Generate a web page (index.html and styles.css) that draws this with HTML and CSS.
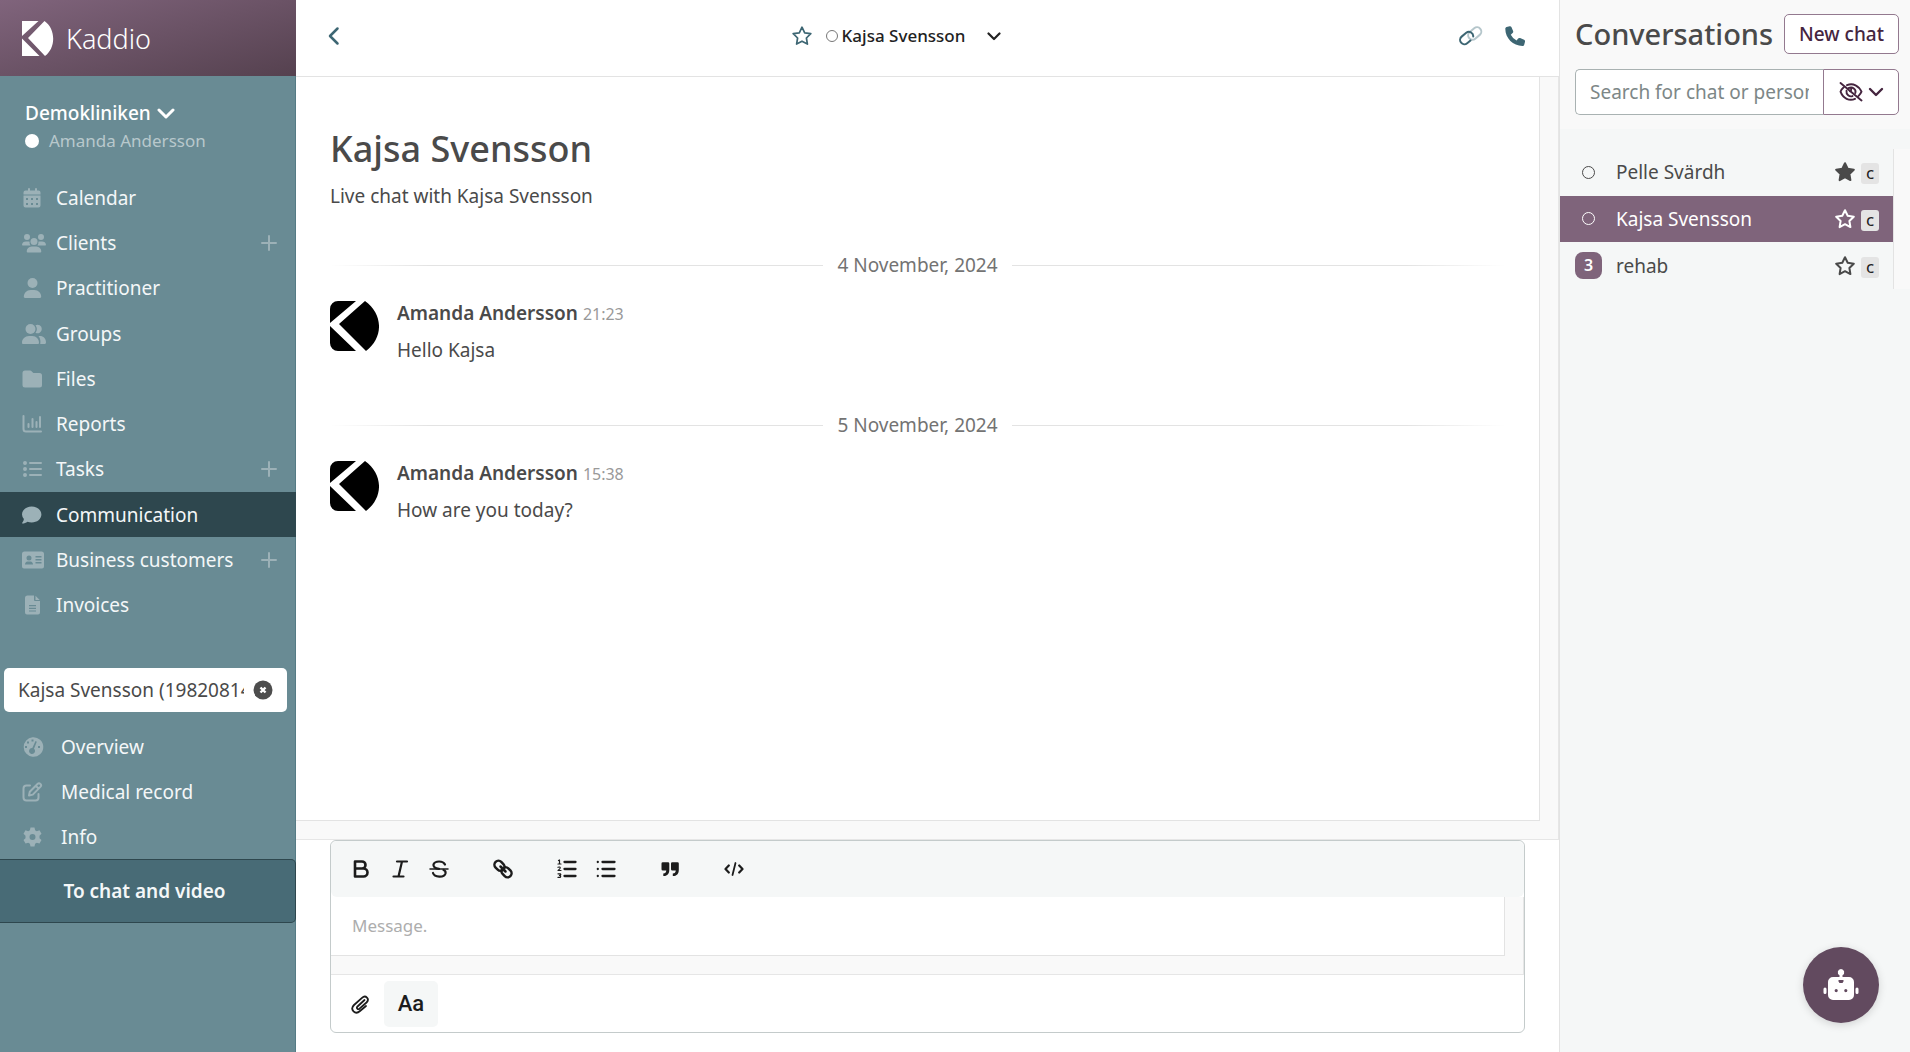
FILE: index.html
```html
<!DOCTYPE html>
<html lang="en">
<head>
<meta charset="utf-8">
<title>Kaddio – Kajsa Svensson</title>
<meta name="viewport" content="width=device-width, initial-scale=1">
<link rel="stylesheet" href="styles.css">
</head>
<body>
<div class="app">
  <aside class="sidebar">
    <a class="brand" href="#">
      <svg class="brand-logo" viewBox="0 0 32 36" aria-hidden="true"><path d="M0 0h16.500L0 15zM22.500 0C34 8 34 27 23 35L6 17zM0 17.500L17.500 35H0z"/></svg>
      <span>Kaddio</span>
    </a>
    <div class="account">
      <button class="clinic" type="button">Demokliniken
        <svg width="18" height="18" viewBox="0 0 18 18" fill="none" stroke="currentColor" stroke-width="3" stroke-linecap="round" stroke-linejoin="round" aria-hidden="true"><path d="M2 6l7 7 7-7"/></svg>
      </button>
      <div class="user"><span class="dot"></span>Amanda Andersson</div>
    </div>
    <nav class="nav" aria-label="Main">
      <div class="item"><a href="#"><svg class="icon" viewBox="0 0 24 20"><path fill-rule="evenodd" d="M6 1a1 1 0 0 1 2 0v1.500h5V1a1 1 0 0 1 2 0v1.500h1.500A2 2 0 0 1 18.500 4.500v2h-17v-2a2 2 0 0 1 2-2H6zM1.500 7.500h17v10a2 2 0 0 1-2 2h-13a2 2 0 0 1-2-2zM4 10v2h2v-2zm5 0v2h2v-2zm5 0v2h2v-2zM4 15v2h2v-2zm5 0v2h2v-2zm5 0v2h2v-2z"/></svg>Calendar</a></div>
      <div class="item"><a href="#"><svg class="icon" viewBox="0 0 24 20"><circle cx="5" cy="4" r="3"/><circle cx="19" cy="4" r="3"/><circle cx="12" cy="8.500" r="3.500"/><path d="M4 8.500h2.500c.4 0 .8.100 1.100.2A5 5 0 0 0 8.500 12.500H.7A.7.700 0 0 1 0 11.800 4 4 0 0 1 4 8.500zM20 8.500h-2.500c-.4 0-.8.100-1.100.2a5 5 0 0 1-.9 3.800h7.800a.7.700 0 0 0 .7-.7A4 4 0 0 0 20 8.500zM9.500 13.500h5A5 5 0 0 1 19.300 18.500a1 1 0 0 1-1 1H5.700a1 1 0 0 1-1-1A5 5 0 0 1 9.500 13.500z"/></svg>Clients</a><button class="add" type="button" aria-label="Add client"><svg viewBox="0 0 16 16"><path d="M8 1v14M1 8h14"/></svg></button></div>
      <div class="item"><a href="#"><svg class="icon" viewBox="0 0 24 20"><circle cx="10.500" cy="5" r="5"/><path d="M8.700 12h3.600c4 0 6.900 3 6.900 6.800 0 .7-.5 1.200-1.200 1.200H3c-.7 0-1.200-.5-1.200-1.200C1.800 15 4.700 12 8.700 12z"/></svg>Practitioner</a></div>
      <div class="item"><a href="#"><svg class="icon" viewBox="0 0 24 20"><circle cx="8.500" cy="5" r="5"/><path d="M7 12h3.500c3.600 0 6.500 3 6.500 6.700 0 .7-.5 1.300-1.200 1.300H1.200C.5 20 0 19.400 0 18.700 0 15 3 12 7 12zM13.500 1.200a4.300 4.300 0 1 1 0 7.600A6.500 6.500 0 0 0 13.500 1.200zM16.500 12H18c3.400 0 6 2.700 6 6.200 0 1.200-.6 1.800-1.300 1.800h-4.500c.6-3.400-.2-6-1.700-8z"/></svg>Groups</a></div>
      <div class="item"><a href="#"><svg class="icon" viewBox="0 0 24 20"><path d="M3 1.500h5c.8 0 1.300.3 1.800.9l1 1c.4.500.8.600 1.400.600H17.500a2.500 2.500 0 0 1 2.500 2.500V16a2.500 2.500 0 0 1-2.500 2.500H3A2.500 2.500 0 0 1 .5 16V4A2.500 2.500 0 0 1 3 1.500z"/></svg>Files</a></div>
      <div class="item"><a href="#"><svg class="icon line" viewBox="0 0 24 20"><path d="M1.500 2v13a2.500 2.500 0 0 0 2.500 2.500h15M6.500 10v3M10.500 5v8M14.500 8v5M18 3v10"/></svg>Reports</a></div>
      <div class="item"><a href="#"><svg class="icon line" viewBox="0 0 24 20"><path d="M8 4h11M8 10h11M8 16h11"/><path stroke-width="4" d="M3 4h0M3 10h0M3 16h0"/></svg>Tasks</a><button class="add" type="button" aria-label="Add task"><svg viewBox="0 0 16 16"><path d="M8 1v14M1 8h14"/></svg></button></div>
      <div class="item active"><a href="#" aria-current="page"><svg class="icon" viewBox="0 0 24 20"><path d="M9.700 1.500c5.400 0 9.700 3.600 9.700 8s-4.300 8-9.700 8c-1.500 0-3-.3-4.200-.8-1.500 1.100-3.300 1.800-5.200 1.800-.4-.3-.2-.7.100-1 .9-1 1.400-2.200 1.500-3.400A7.300 7.300 0 0 1 0 9.500c0-4.400 4.300-8 9.700-8z"/></svg>Communication</a></div>
      <div class="item"><a href="#"><svg class="icon" viewBox="0 0 24 20"><path fill-rule="evenodd" d="M2.500 1.500h17A2.500 2.500 0 0 1 22 4v12.500a2 2 0 0 1-2 2H2a2 2 0 0 1-2-2V4a2.500 2.500 0 0 1 2.500-2.500zM7 5.500a2.500 2.500 0 1 0 0 5 2.500 2.500 0 0 0 0-5zM5.500 11.500C4 11.500 3 13 3 14.500h8c0-1.500-1-3-2.500-3zM13.500 6v1.500h6V6zm0 3v1.500h6V9zm0 3v1.500h6V12z"/></svg>Business customers</a><button class="add" type="button" aria-label="Add business customer"><svg viewBox="0 0 16 16"><path d="M8 1v14M1 8h14"/></svg></button></div>
      <div class="item"><a href="#"><svg class="icon" viewBox="0 0 24 20"><path fill-rule="evenodd" d="M5.500.5H12V5a1 1 0 0 0 1 1h5v11.500a2 2 0 0 1-2 2H5a2 2 0 0 1-2-2V3A2.500 2.500 0 0 1 5.500.5zM13.500.8L17.700 5h-4.200zM7 10v1.200h7V10zm0 2.700v1.200h7v-1.200zm0 2.700v1.200h7v-1.200z"/></svg>Invoices</a></div>
    </nav>
    <div class="client-picker">
      <input type="text" aria-label="Selected client" value="Kajsa Svensson (19820814-1234)">
      <button type="button" aria-label="Clear client"><svg viewBox="0 0 20 20"><circle cx="10" cy="10" r="9.500" fill="#4d4d4d"/><path d="M7.500 7.500l5 5M12.500 7.500l-5 5" stroke="#fff" stroke-width="2.400"/></svg></button>
    </div>
    <nav class="nav client-nav" aria-label="Client">
      <div class="item"><a href="#"><svg class="icon" viewBox="0 0 24 20"><path fill-rule="evenodd" d="M10.500.3a9.800 9.800 0 1 1 0 19.500 9.800 9.800 0 0 1 0-19.500zm3 3.700L10.300 11A3 3 0 1 0 12 11.700L14.800 4.700zM9.500 2.500v2h2v-2zM5 4.500v2h2v-2zM3 9v2h2V9zm13 0v2h2V9z"/></svg>Overview</a></div>
      <div class="item"><a href="#"><svg class="icon line" viewBox="0 0 24 20"><path d="M8 3.500H4.500A3 3 0 0 0 1.500 6.500v9a3 3 0 0 0 3 3h9a3 3 0 0 0 3-3V12M7 13.500l.8-3.800 7.700-7.700a1.900 1.900 0 0 1 2.900 2.900l-7.600 7.700zM14 4l2.500 2.500"/></svg>Medical record</a></div>
      <div class="item"><a href="#"><svg class="icon" viewBox="0 0 24 20"><path fill-rule="evenodd" d="M8.500.5h4l.6 2.700 1.700 1 2.700-.9 2 3.500-2 1.900v2.500l2 1.900-2 3.500-2.700-.8-1.700 1-.6 2.700h-4l-.6-2.700-1.700-1-2.700.8-2-3.500 2-1.900V8.700l-2-1.900 2-3.500 2.700.9 1.700-1zM10.500 7a3 3 0 1 0 0 6 3 3 0 0 0 0-6z"/></svg>Info</a></div>
    </nav>
    <a class="to-chat" href="#">To chat and video</a>
  </aside>

  <main class="main">
    <header class="topbar">
      <button type="button" aria-label="Back"><svg width="22" height="22" viewBox="0 0 22 22" class="stroke" stroke-width="2.500"><path d="M13.500 3.500L6 11l7.500 7.500"/></svg></button>
      <div class="topbar-title">
        <button type="button" aria-label="Favourite"><svg width="20" height="20" viewBox="0 0 20 20" class="stroke" stroke-width="1.700"><path d="M10 1.200l2.700 5.600 6.100.9-4.400 4.300 1 6.100L10 15.200l-5.400 2.900 1-6.100L1.200 7.700l6.100-.9z"/></svg></button>
        <button class="person" type="button"><span class="ring"></span>Kajsa Svensson<svg width="14" height="14" viewBox="0 0 14 14" class="stroke" stroke-width="2.200"><path d="M1.500 4.500L7 10l5.500-5.500"/></svg></button>
      </div>
      <div class="topbar-actions">
        <button type="button" aria-label="Copy link"><svg width="24" height="20" viewBox="0 0 24 20" class="stroke" stroke-width="2"><rect x="8.500" y="3.200" width="14.500" height="8.600" rx="4.300" transform="rotate(-40 15.700 7.500)" stroke="#b5c6cb"/><path transform="rotate(-40 7.700 12)" d="M9 16.300H4.700a4.300 4.300 0 0 1 0-8.600h6a4.300 4.300 0 0 1 3 7.300"/></svg></button>
        <button type="button" aria-label="Call"><svg width="20" height="20" viewBox="0 0 20 20"><path fill="currentColor" d="M6.400 1.100l1.700 4c.3.700.1 1.500-.5 2L5.800 8.700a13 13 0 0 0 5.800 5.800l1.500-1.900c.5-.6 1.300-.8 2-.5l4 1.700c.7.300 1.100 1.100.9 1.900l-.8 3c-.2.800-.9 1.300-1.700 1.300C8.100 20 .3 12.200.3 2.800c0-.8.500-1.500 1.300-1.700l3-.9c.8-.2 1.500.2 1.800.9z"/></svg></button>
      </div>
    </header>

    <section class="scrollframe thread" aria-label="Messages">
      <div class="scrollbody messages">
        <h1>Kajsa Svensson</h1>
        <p class="intro">Live chat with Kajsa Svensson</p>
        <div class="day"><span>4 November, 2024</span></div>
        <article class="message">
          <svg class="avatar" viewBox="0 0 49 50" aria-hidden="true"><path d="M8 0h18L0 22V8a8 8 0 0 1 8-8zM35 0c18 13 19 36 1 50L9 23zM0 25l26 25H8a8 8 0 0 1-8-8z"/></svg>
          <div><div class="meta"><strong>Amanda Andersson</strong> <time>21:23</time></div><p>Hello Kajsa</p></div>
        </article>
        <div class="day"><span>5 November, 2024</span></div>
        <article class="message">
          <svg class="avatar" viewBox="0 0 49 50" aria-hidden="true"><path d="M8 0h18L0 22V8a8 8 0 0 1 8-8zM35 0c18 13 19 36 1 50L9 23zM0 25l26 25H8a8 8 0 0 1-8-8z"/></svg>
          <div><div class="meta"><strong>Amanda Andersson</strong> <time>15:38</time></div><p>How are you today?</p></div>
        </article>
      </div>
    </section>

    <form class="editor">
      <div class="toolbar">
        <div class="tools">
          <button type="button" aria-label="Bold"><svg viewBox="0 0 20 20" class="stroke" stroke-width="2.600"><path d="M4 2.500h7a3.500 3.500 0 0 1 0 7H4zM4 9.500h8.500a4 4 0 0 1 0 8H4z"/></svg></button>
          <button type="button" aria-label="Italic"><svg viewBox="0 0 20 20" class="stroke" stroke-width="2.200"><path d="M7 2.500h10M3.500 17.500h10M12 2.500L8.500 17.500"/></svg></button>
          <button type="button" aria-label="Strikethrough"><svg viewBox="0 0 20 20" class="stroke" stroke-width="2.200"><path d="M16 5.500C14 1.500 6 1.500 4.500 5.500 4 7.500 6 9.500 10 9.800M4 14c1.500 4.500 11 5 12.500.5.300-1.500-.5-3-2-3.500"/><path stroke-width="1.500" d="M1 10h18"/></svg></button>
        </div>
        <div class="tools">
          <button type="button" aria-label="Link"><svg viewBox="0 0 20 20" class="stroke" stroke-width="2.500"><rect x="1" y="2.800" width="11" height="8" rx="4" transform="rotate(45 6.500 6.800)"/><rect x="8" y="9.200" width="11" height="8" rx="4" transform="rotate(45 13.500 13.200)"/><path d="M7.500 7.500l5 5"/></svg></button>
        </div>
        <div class="tools">
          <button type="button" aria-label="Numbered list"><svg viewBox="0 0 20 20" class="stroke" stroke-width="2.300"><path d="M7.500 3h11M7.500 10h11M7.500 17h11"/><path stroke-width="1.200" d="M1.500 1.500l1-.5v4M1 5h3M1 8.300c2.500-1 3.500.5 0 3.200h3M1 14.800h2.500c.8 1-.2 1.600-1 1.600 1.500 0 1.500 2 .2 2H1"/></svg></button>
          <button type="button" aria-label="Bulleted list"><svg viewBox="0 0 20 20" class="stroke" stroke-width="2.300"><path d="M6.500 3h12M6.500 10h12M6.500 17h12M1.800 3h0M1.800 10h0M1.800 17h0"/></svg></button>
        </div>
        <div class="tools">
          <button type="button" aria-label="Quote"><svg viewBox="0 0 20 20"><path fill="currentColor" d="M1.500 4.500a1.300 1.300 0 0 1 1.300-1.300h5.200a1.300 1.300 0 0 1 1.300 1.300v6.200c0 4-2 6.300-6 6.300v-2.500c2 0 2.800-1 3-3H2.800a1.300 1.300 0 0 1-1.300-1.300zm9.500 0a1.300 1.300 0 0 1 1.300-1.300h5.200a1.300 1.300 0 0 1 1.300 1.300v6.200c0 4-2 6.300-6 6.300v-2.500c2 0 2.800-1 3-3h-3.500a1.300 1.300 0 0 1-1.300-1.300z"/></svg></button>
        </div>
        <div class="tools">
          <button type="button" aria-label="Code"><svg viewBox="0 0 20 20" class="stroke" stroke-width="2.200"><path d="M4.800 6.500L1.500 10l3.300 3.500M15.200 6.500l3.300 3.500-3.300 3.500"/><path stroke-width="1.800" d="M11.500 4l-3 12"/></svg></button>
        </div>
      </div>
      <div class="scrollframe">
        <textarea class="scrollbody" rows="1" placeholder="Message." aria-label="Message"></textarea>
      </div>
      <div class="editor-footer">
        <button class="attach" type="button" aria-label="Attach file"><svg width="20" height="20" viewBox="0 0 20 20" class="stroke" stroke-width="1.800"><path d="M14.500 6l-7 6.500c-1.500 1.500.3 3.500 2 2.200l7-6.200c3.500-3.500-.8-8-4.500-4.700L4 11c-4.500 4.500 1.200 10.300 6 6l6-5"/></svg></button>
        <button class="format" type="button" aria-pressed="true">Aa</button>
      </div>
    </form>
  </main>

  <aside class="conversations">
    <div class="conv-head">
      <div class="conv-title"><h2>Conversations</h2><button class="outline" type="button">New chat</button></div>
      <div class="conv-search">
        <input type="text" placeholder="Search for chat or person" aria-label="Search for chat or person">
        <button type="button" aria-label="Visibility">
          <svg width="24" height="20" viewBox="0 0 24 20" class="stroke" stroke-width="1.900"><path d="M1.500 1l21 17.500M8 3.200C14 .5 20 4 22.500 9.700c-.7 1.700-1.600 3-2.900 4.200M4.500 5.500C3 6.700 2 8.300 1.500 9.700 4 16.500 10.500 19.500 16 16.800"/><path d="M9.500 6.200c4-2.200 8 1.300 6.800 4.800M7.500 8.800c-.6 3.500 3 6.500 6 5.300M12 6c.5 1.500 0 3-1 3.200"/></svg>
          <svg width="16" height="16" viewBox="0 0 16 16" class="stroke" stroke-width="2.400"><path d="M2 5l6 6 6-6"/></svg>
        </button>
      </div>
    </div>
    <div class="conv-list">
      <ul>
        <li><span class="status"><span class="ring"></span></span><a href="#">Pelle Svärdh</a><svg class="star filled" viewBox="0 0 20 20"><path d="M10 1.200l2.700 5.600 6.100.9-4.400 4.300 1 6.100L10 15.200l-5.400 2.900 1-6.100L1.200 7.700l6.100-.9z"/></svg><kbd>c</kbd></li>
        <li class="selected"><span class="status"><span class="ring"></span></span><a href="#">Kajsa Svensson</a><svg class="star" viewBox="0 0 20 20"><path d="M10 1.200l2.700 5.600 6.100.9-4.400 4.300 1 6.100L10 15.200l-5.400 2.900 1-6.100L1.200 7.700l6.100-.9z"/></svg><kbd>c</kbd></li>
        <li><span class="status"><span class="count">3</span></span><a href="#">rehab</a><svg class="star" viewBox="0 0 20 20"><path d="M10 1.200l2.700 5.600 6.100.9-4.400 4.300 1 6.100L10 15.200l-5.400 2.900 1-6.100L1.200 7.700l6.100-.9z"/></svg><kbd>c</kbd></li>
      </ul>
    </div>
  </aside>
</div>
<button class="bot" type="button" aria-label="Assistant"><svg width="36" height="32" viewBox="0 0 36 32"><path fill="#fff" fill-rule="evenodd" d="M18 0a3.300 3.300 0 0 1 1.500 6.200V8H26a5 5 0 0 1 5 5v13a5 5 0 0 1-5 5H10a5 5 0 0 1-5-5V13a5 5 0 0 1 5-5h6.500V6.200A3.300 3.300 0 0 1 18 0zM15.500 11v1.500l1 1.500h3l1-1.500V11zM13.200 20a1.600 1.600 0 1 0 0 3.200 1.600 1.600 0 0 0 0-3.200zm9.600 0a1.600 1.600 0 1 0 0 3.200 1.600 1.600 0 0 0 0-3.200zM2 18.500a1.500 1.500 0 0 1 1.500 1.500v3.500a1.500 1.500 0 0 1-3 0V20A1.500 1.500 0 0 1 2 18.500zm32 0a1.500 1.500 0 0 1 1.500 1.500v3.500a1.500 1.500 0 0 1-3 0V20a1.500 1.500 0 0 1 1.500-1.500z"/></svg></button>
</body>
</html>
```
FILE: styles.css
```css
* { box-sizing: border-box; }

body {
  margin: 0;
  font-family: "Noto Sans", sans-serif;
  font-size: 19px;
  line-height: 28px;
  color: #4a4a4a;
  background: #fff;
}

h1, h2, p, ul { margin: 0; padding: 0; }
ul { list-style: none; }
a { color: inherit; text-decoration: none; }
button, input, textarea { font: inherit; color: inherit; }
button { display: inline-flex; align-items: center; justify-content: center; padding: 0; border: 0; background: none; cursor: pointer; }
svg { flex: none; }
.stroke { fill: none; stroke: currentColor; stroke-linecap: round; stroke-linejoin: round; }

.app { display: grid; grid-template-columns: 296px minmax(0, 1fr) 350px; min-height: 100vh; }

/* Sidebar */
.sidebar { display: flex; flex-direction: column; background: #698b94; border-right: 1px solid #557b85; color: #f4f7f8; }
.brand { display: flex; align-items: center; gap: 12px; height: 76px; margin-right: -1px; padding: 2px 22px 0; background: linear-gradient(165deg, #80647c, #55414f); color: #fff; font-size: 27px; font-weight: 300; }
.brand-logo { width: 32px; height: 36px; fill: #fff; }
.account { padding: 23px 25px 20px; }
.clinic { gap: 6px; font-weight: 500; color: #fff; }
.user { display: flex; align-items: center; gap: 10px; font-size: 17px; color: #b8c8cc; }
.dot { width: 14px; height: 14px; border-radius: 50%; background: #fff; }

.nav { display: grid; grid-auto-rows: 1fr; height: 453px; }
.item { display: flex; align-items: center; padding-right: 18px; }
.item a { display: flex; flex: 1; align-items: center; gap: 10px; padding-left: 22px; }
.item.active { margin-right: -1px; padding-right: 19px; background: #2e474e; }
.icon { width: 24px; height: 20px; fill: #9cb1b7; }
.icon.line { fill: none; stroke: #9cb1b7; stroke-width: 2; stroke-linecap: round; stroke-linejoin: round; }
.add svg { width: 16px; height: 16px; stroke: #9cb1b7; stroke-width: 2; stroke-linecap: round; }
.client-picker { display: flex; align-items: center; height: 44px; margin: 40px 8px 12px 4px; padding: 0 14px; border-radius: 5px; background: #fff; color: #4a4a4a; }
.client-picker input { flex: 1; min-width: 0; padding: 0; margin-right: 9px; border: 0; outline: 0; background: none; }
.client-picker svg { width: 20px; height: 20px; }
.client-nav { height: 135px; }
.client-nav a { gap: 15px; }
.to-chat { display: flex; align-items: center; justify-content: center; height: 64px; margin-right: -1px; padding-right: 6px; border: 1px solid #2e474e; border-left: 0; border-radius: 0 5px 5px 0; background: #486b76; font-weight: 600; }

/* Conversation thread */
.main { display: flex; flex-direction: column; border-right: 1px solid #e3e3e3; }
.topbar { display: grid; grid-template-columns: 1fr auto 1fr; align-items: center; height: 77px; padding: 0 34px 5px 28px; border-bottom: 1px solid #e3e3e3; color: #3d6673; }
.topbar > button { justify-self: start; }
.topbar-title { display: flex; align-items: center; gap: 14px; padding-right: 56px; }
.person { color: #222; font-size: 17px; font-weight: 500; }
.person svg { margin-left: 22px; }
.ring { width: 12px; height: 12px; margin-right: 4px; border: 1px solid #777; border-radius: 50%; }
.topbar-actions { display: flex; justify-self: end; gap: 22px; }

.scrollframe { padding: 0 18px 18px 0; border: solid #e6e6e6; border-width: 0 1px 1px 0; background: #f9f9f9; }
.scrollbody { border: solid #e3e3e3; border-width: 0 1px 1px 0; background: #fff; }
.thread { display: flex; flex: 1; }
.messages { flex: 1; padding: 46px 34px 40px; }
.messages h1 { font-size: 36px; line-height: 52px; font-weight: 500; }
.intro { margin-top: 7px; }
.day { display: flex; align-items: center; gap: 14px; margin: 41px 0 20px; color: #737373; }
.day::before, .day::after { content: ""; flex: 1; height: 1px; background: linear-gradient(90deg, transparent, #e3e3e3 20%); }
.day::after { background: linear-gradient(270deg, transparent, #e3e3e3 20%); }
.message { display: flex; gap: 18px; padding-bottom: 6px; }
.avatar { width: 49px; height: 50px; margin-top: 2px; }
.message strong { font-weight: 600; }
.message time { font-size: 16px; color: #999; }
.message p { margin-top: 8px; }

/* Message editor */
.editor { margin: 0 34px 19px; border: 1px solid #c4cbcb; border-radius: 6px; }
.toolbar { display: flex; gap: 44px; height: 56px; padding: 0 20px; border-radius: 6px; background: #f5f7f7; color: #1c1c1c; }
.tools { display: flex; align-items: center; gap: 19px; }
.tools svg { width: 20px; height: 20px; }
.editor textarea { display: block; width: 100%; height: 59px; padding: 15px 21px; resize: none; outline: 0; border-radius: 0; font-size: 17px; }
.editor textarea::placeholder { color: #adadad; }
.editor-footer { display: flex; align-items: center; height: 57px; padding: 0 19px; gap: 14px; color: #1c1c1c; }
.format { width: 54px; height: 46px; border-radius: 5px; background: #f5f7f7; font-family: Roboto, sans-serif; font-size: 22px; font-weight: 500; }

/* Conversation list */
.conversations { background: #f5f7f7; }
.conv-head { padding: 14px 11px 14px 15px; background: #f9f9f9; }
.conv-title { display: flex; align-items: center; justify-content: space-between; }
.conv-title h2 { font-size: 29px; line-height: 40px; font-weight: 500; }
.outline { height: 40px; padding: 0 14px; border: 1px solid #93798f; border-radius: 5px; background: #fff; color: #45253f; font-weight: 500; }
.conv-search { display: flex; margin-top: 15px; }
.conv-search input { flex: 1; min-width: 0; height: 46px; padding: 0 14px; border: 1px solid #a9b2b2; border-right: 0; border-radius: 5px 0 0 5px; outline: 0; background: #fff; }
.conv-search input::placeholder { color: #7d8787; }
.conv-search button { gap: 5px; width: 76px; border: 1px solid #93798f; border-radius: 0 5px 5px 0; background: #fff; color: #45253f; }
.conv-list { margin-top: 20px; padding-right: 16px; background: #f9f9f9; }
.conv-list ul { display: grid; grid-auto-rows: 1fr; height: 140px; border-right: 1px solid #e3e3e3; background: #f5f7f7; }
.conv-list li { display: flex; align-items: center; padding: 0 14px 0 15px; }
.conv-list a { flex: 1; }
.conv-list .selected { background: #7f647b; color: #fff; }
.status { display: flex; justify-content: center; width: 27px; margin-right: 14px; }
.status .ring { width: 13px; height: 13px; margin: 0; border-color: currentColor; }
.count { width: 27px; height: 27px; border-radius: 8px; background: #7f647b; color: #fff; font-size: 16px; line-height: 27px; font-weight: 600; text-align: center; }
.star { width: 20px; height: 20px; margin-right: 6px; fill: none; stroke: currentColor; stroke-width: 2; stroke-linejoin: round; }
.star.filled { fill: currentColor; }
kbd { width: 18px; height: 21px; margin-top: 3px; border-radius: 3px; background: #e4e4e4; color: #222; font-family: inherit; font-size: 17px; line-height: 20px; text-align: center; }

.bot { position: fixed; right: 31px; bottom: 29px; width: 76px; height: 76px; border-radius: 50%; background: #624a5f; box-shadow: 0 2px 8px rgba(0, 0, 0, .15); }
```
